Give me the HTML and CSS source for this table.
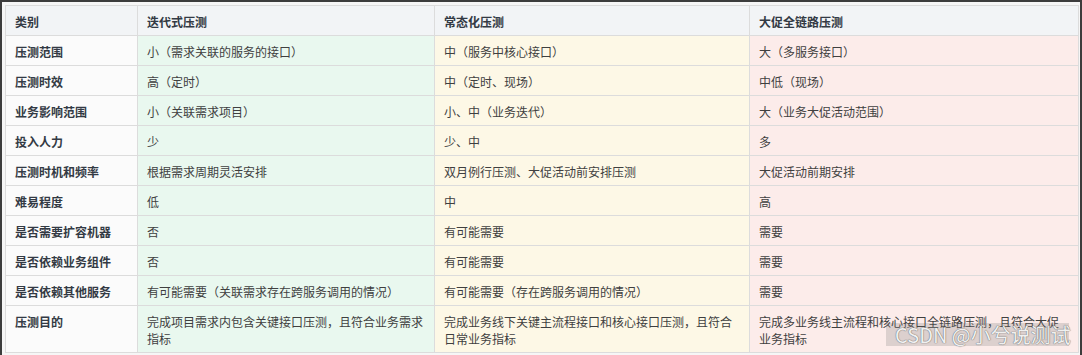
FILE: index.html
```html
<!DOCTYPE html>
<html lang="zh-CN">
<head>
<meta charset="utf-8">
<title>压测对比</title>
<link rel="stylesheet" href="styles.css">
</head>
<body>
<div class="frame">
  <table class="cmp">
    <colgroup>
      <col class="c1"><col class="c2"><col class="c3"><col class="c4">
    </colgroup>
    <thead>
      <tr><th>类别</th><th>迭代式压测</th><th>常态化压测</th><th>大促全链路压测</th></tr>
    </thead>
    <tbody>
      <tr><th>压测范围</th><td class="g">小（需求关联的服务的接口）</td><td class="y">中（服务中核心接口）</td><td class="p">大（多服务接口）</td></tr>
      <tr><th>压测时效</th><td class="g">高（定时）</td><td class="y">中（定时、现场）</td><td class="p">中低（现场）</td></tr>
      <tr><th>业务影响范围</th><td class="g">小（关联需求项目）</td><td class="y">小、中（业务迭代）</td><td class="p">大（业务大促活动范围）</td></tr>
      <tr><th>投入人力</th><td class="g">少</td><td class="y">少、中</td><td class="p">多</td></tr>
      <tr><th>压测时机和频率</th><td class="g">根据需求周期灵活安排</td><td class="y">双月例行压测、大促活动前安排压测</td><td class="p">大促活动前期安排</td></tr>
      <tr><th>难易程度</th><td class="g">低</td><td class="y">中</td><td class="p">高</td></tr>
      <tr><th>是否需要扩容机器</th><td class="g">否</td><td class="y">有可能需要</td><td class="p">需要</td></tr>
      <tr><th>是否依赖业务组件</th><td class="g">否</td><td class="y">有可能需要</td><td class="p">需要</td></tr>
      <tr><th>是否依赖其他服务</th><td class="g">有可能需要（关联需求存在跨服务调用的情况）</td><td class="y">有可能需要（存在跨服务调用的情况）</td><td class="p">需要</td></tr>
      <tr><th>压测目的</th><td class="g">完成项目需求内包含关键接口压测，且符合业务需求指标</td><td class="y">完成业务线下关键主流程接口和核心接口压测，且符合日常业务指标</td><td class="p">完成多业务线主流程和核心接口全链路压测，且符合大促业务指标</td></tr>
    </tbody>
  </table>
  <div class="mark">CSDN @小兮说测试</div>
</div>
</body>
</html>
```

FILE: styles.css
```css
html, body {
  margin: 0;
  padding: 0;
  background: #f4f4f4;
}
body {
  width: 1082px;
  height: 355px;
  overflow: hidden;
  font-family: "Noto Sans CJK SC", "Noto Sans", sans-serif;
}
.frame {
  position: relative;
  box-sizing: border-box;
  width: 1082px;
  height: 355px;
  border-top: 2px solid #3c3c3c;
  border-left: 2px solid #3c3c3c;
  border-right: 2px solid #3c3c3c;
  padding: 3px 3px 0 3px;
  background: #f6f6f6;
}
.cmp {
  width: 1073px;
  table-layout: fixed;
  border-collapse: collapse;
  font-size: 12px;
  line-height: 17px;
  color: #3f3f3f;
}
.c1 { width: 132px; }
.c2 { width: 297px; }
.c3 { width: 315px; }
.c4 { width: 329px; }
.cmp th, .cmp td {
  border: 1px solid #dcdcdc;
  padding: 7px 9px 5px 9px;
  text-align: left;
  vertical-align: top;
}
.cmp th {
  font-weight: bold;
  color: #333a44;
}
.cmp thead th {
  background: #f2f4f6;
}
.cmp tbody th {
  background: #fbfbfb;
}
.cmp td.g { background: #e9f8ef; }
.cmp td.y { background: #fdf8e6; }
.cmp td.p { background: #fcecea; }
.mark {
  position: absolute;
  left: 884px;
  top: 321px;
  width: 183px;
  height: 23px;
  background: rgba(110, 110, 110, 0.22);
  color: #f0f0f0;
  font-size: 20px;
  line-height: 23px;
  padding-left: 9px;
  box-sizing: border-box;
  text-shadow: 0 0 1px #6f6f6f, 0 0 1px #6f6f6f;
  white-space: nowrap;
}
```
